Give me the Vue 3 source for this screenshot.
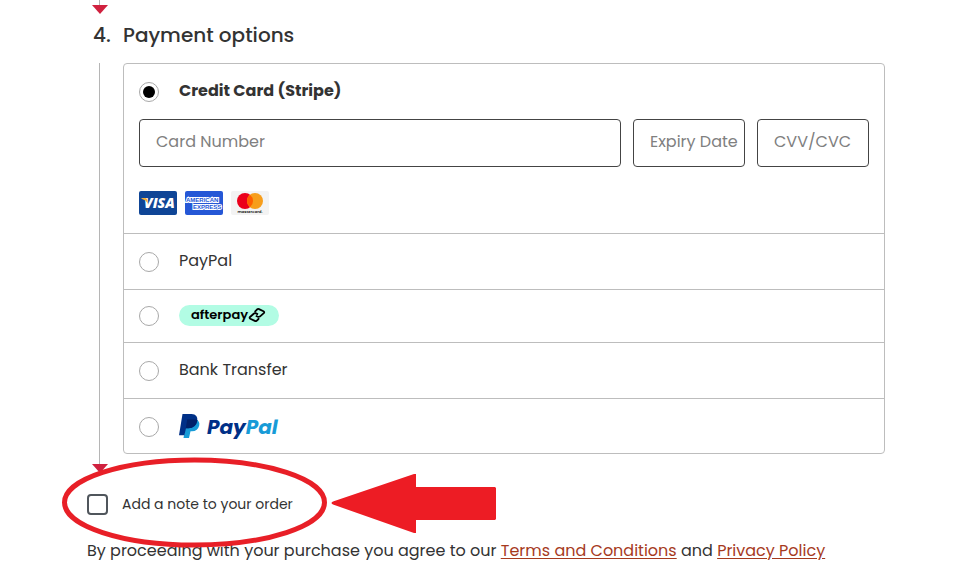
<template>
  <main class="checkout">
    <div class="rail rail-top">
      <span class="rail-line"></span>
      <span class="rail-arrow"></span>
    </div>

    <h2 class="step-title"><span class="step-number">4.</span>Payment options</h2>

    <div class="step">
      <div class="rail">
        <span class="rail-line"></span>
        <span class="rail-arrow"></span>
      </div>

      <div class="methods" role="radiogroup" aria-label="Payment options">
        <div v-for="m in methods" :key="m.id" class="method" :class="'method-' + m.kind">
          <label class="method-label">
            <input type="radio" name="payment" class="radio" :value="m.id" v-model="selected" />
            <span v-if="m.kind === 'text' || m.kind === 'card'" class="method-name">{{ m.name }}</span>

            <svg v-else-if="m.kind === 'afterpay'" class="logo" width="100" height="21" viewBox="0 0 100 21" role="img" :aria-label="m.name">
              <rect width="100" height="21" rx="10.5" fill="#b2fce4" />
              <text x="12" y="14" class="afterpay-text">afterpay</text>
              <g fill="none" stroke="#000" stroke-width="1.8" stroke-linejoin="round">
                <path d="M76.200 7.500 L76.200 6.300 L78.200 4.300 Q79 3.700 80 4.100 L84.500 6.300 Q85.800 7.100 84.800 8.100 L80.800 11.600 Q79.800 12.200 78.800 11.700 L76.800 10.700" />
                <path d="M79.500 13 L79.500 14 L77.600 15.800 Q76.800 16.400 75.800 15.900 L71.300 13.800 Q70 13 71 12 L75 8.500 Q76 7.900 77 8.400 L79 9.400" />
              </g>
            </svg>

            <svg v-else class="logo" width="100" height="26" viewBox="0 0 100 26" role="img" :aria-label="m.name">
              <path d="M8 5 H17 Q21.200 7.500 20.200 11.500 Q18.800 17.300 13 17.300 H11.500 L10 24 H4.500 Z" fill="#179bd7" />
              <path d="M3.500 0 H12.500 Q19.300 0.300 18.200 7 Q16.800 14.200 9.500 14.200 H7 L5.400 21.300 H0 Z" fill="#003087" />
              <path d="M8.200 5.500 H17.900 Q18.600 6 18.200 7 Q16.800 14.200 9.500 14.200 H6.800 Z" fill="#012169" />
              <text x="28" y="20" class="paypal-text"><tspan fill="#003087">Pay</tspan><tspan fill="#179bd7">Pal</tspan></text>
            </svg>
          </label>

          <template v-if="m.kind === 'card'">
            <div class="fields">
              <input class="field field-number" v-model="card.number" placeholder="Card Number" aria-label="Card Number" />
              <input class="field" v-model="card.expiry" placeholder="Expiry Date" aria-label="Expiry Date" />
              <input class="field" v-model="card.cvc" placeholder="CVV/CVC" aria-label="CVV/CVC" />
            </div>
            <div class="brands">
              <svg width="38" height="24" viewBox="0 0 38 24" role="img" aria-label="Visa">
                <rect width="38" height="24" rx="2" fill="#0f4596" />
                <text x="5" y="17" class="visa-text">VISA</text>
                <path d="M2.500 7 H6.500 Q8 7.200 8.300 9 L9 12.500 Q7 9 2.500 7.700 Z" fill="#f0ad3c" />
              </svg>
              <svg width="38" height="24" viewBox="0 0 38 24" role="img" aria-label="American Express">
                <rect width="38" height="24" rx="2" fill="#2557d6" />
                <text x="1" y="11" class="amex-text">AMERICAN</text>
                <text x="8" y="18" class="amex-text">EXPRESS</text>
              </svg>
              <svg width="38" height="24" viewBox="0 0 38 24" role="img" aria-label="Mastercard">
                <rect width="38" height="24" rx="2" fill="#f3f3f3" />
                <circle cx="14" cy="10" r="8" fill="#eb001b" />
                <circle cx="24" cy="10" r="8" fill="#f79e1b" />
                <path d="M19 3.750 A8 8 0 0 1 19 16.250 A8 8 0 0 1 19 3.750 Z" fill="#ff5f00" />
                <text x="19" y="22" text-anchor="middle" class="mc-text">mastercard.</text>
              </svg>
            </div>
          </template>
        </div>
      </div>
    </div>

    <div class="note">
      <label class="note-label">
        <input type="checkbox" class="check" v-model="addNote" />
        <span>Add a note to your order</span>
      </label>
      <svg class="callout" width="436" height="92" viewBox="0 0 436 92" aria-hidden="true">
        <ellipse cx="132.500" cy="45.500" rx="130" ry="42.500" fill="none" stroke="#e81f27" stroke-width="5" />
        <path d="M271 44.500 L352 17 H354 V30 H433 L434 31 V62 L433 63 H354 V76 H352 L271 47.500 Q268 46 271 44.500 Z" fill="#ed1c24" />
      </svg>
    </div>

    <p class="terms">
      By proceeding with your purchase you agree to our
      <a href="#terms">Terms and Conditions</a> and <a href="#privacy">Privacy Policy</a>
    </p>
  </main>
</template>

<script setup>
import { reactive, ref } from 'vue'

const methods = [
  { id: 'stripe', kind: 'card', name: 'Credit Card (Stripe)' },
  { id: 'paypal', kind: 'text', name: 'PayPal' },
  { id: 'afterpay', kind: 'afterpay', name: 'Afterpay' },
  { id: 'bank', kind: 'text', name: 'Bank Transfer' },
  { id: 'paypal-express', kind: 'paypal', name: 'PayPal' }
]

const selected = ref('stripe')
const addNote = ref(false)
const card = reactive({ number: '', expiry: '', cvc: '' })
</script>

<style>
body {
  margin: 0;
  background: #fff;
}
</style>

<style scoped>
.checkout {
  padding: 0 68px 0 87px;
  font-family: Poppins, Inter, "Open Sans", sans-serif;
  font-size: 16px;
  line-height: 24px;
  color: #333;
}
.rail {
  display: flex;
  flex-direction: column;
  align-items: center;
  width: 25px;
}
.rail-top { height: 14px; }
.rail-line {
  flex: 1;
  width: 1px;
  background: #b5b5b5;
}
.rail-arrow {
  border: 8px solid transparent;
  border-top: 9px solid #d0213f;
  border-bottom: 0;
}
.step-title {
  display: flex;
  margin: 0;
  padding: 6px 0 13px 6px;
  font-size: 20px;
  font-weight: 500;
  line-height: 30px;
}
.step-number { width: 30px; }
.step {
  display: flex;
  gap: 11px;
}
.methods {
  flex: 1;
  min-width: 0;
  margin-bottom: 19px;
  border: 1px solid #bdbdbd;
  border-radius: 4px;
}
.method {
  padding: 16px 15px 15px;
}
.method + .method { border-top: 1px solid #bdbdbd; }
.method-card { padding-bottom: 18px; }
.method-afterpay { padding: 14px 15px; }
.method-paypal { padding-bottom: 14px; }
.method-label {
  display: flex;
  gap: 20px;
  height: 24px;
}
.method-card .method-name { font-weight: 700; }
.method-card .method-label { height: 23px; }
.method-name { margin-top: -1px; }
.radio {
  appearance: none;
  flex: none;
  display: grid;
  place-items: center;
  width: 20px;
  height: 20px;
  margin: 2px 0;
  border: 1px solid #a8a8a8;
  border-radius: 50%;
  background: #fff;
}
.radio:checked::before {
  content: "";
  width: 12px;
  height: 12px;
  border-radius: 50%;
  background: #000;
}
.logo { margin-top: -1px; }
.method-afterpay .logo { margin-top: 1px; }
.afterpay-text {
  font-size: 13px;
  font-weight: 600;
  fill: #000;
}
.paypal-text {
  font-size: 20px;
  font-weight: 700;
  font-style: italic;
}
.fields {
  display: flex;
  gap: 12px;
  margin-top: 16px;
}
.field {
  box-sizing: border-box;
  width: 112px;
  height: 48px;
  padding: 0 0 4px 16px;
  border: 1px solid #444;
  border-radius: 4px;
  background: #fff;
  font: inherit;
  color: #333;
}
.field-number {
  flex: 1;
  min-width: 0;
}
.field::placeholder {
  color: #808080;
  opacity: 1;
}
.brands {
  display: flex;
  gap: 8px;
  margin-top: 24px;
}
.visa-text {
  font-family: "Open Sans", sans-serif;
  font-size: 14px;
  font-weight: 800;
  font-style: italic;
  fill: #fff;
}
.amex-text {
  font-family: "Liberation Sans", sans-serif;
  font-size: 6px;
  font-weight: 700;
  fill: #2557d6;
  stroke: #fff;
  stroke-width: 2px;
  paint-order: stroke;
}
.mc-text {
  font-size: 4px;
  font-weight: 600;
  fill: #222;
}
.note {
  position: relative;
  padding: 20px 0 17px;
}
.note-label {
  display: inline-flex;
  align-items: center;
  gap: 14px;
  font-size: 14px;
  line-height: 22px;
}
.check {
  appearance: none;
  box-sizing: border-box;
  width: 21px;
  height: 21px;
  margin: 0;
  border: 2px solid #50565c;
  border-radius: 4px;
  background: #fff;
}
.check:checked { background: #50565c; }
.callout {
  position: absolute;
  top: -16px;
  left: -25px;
  pointer-events: none;
}
.terms { margin: 0; }
.terms a {
  color: #a63a1e;
  text-underline-offset: 2px;
}
</style>
